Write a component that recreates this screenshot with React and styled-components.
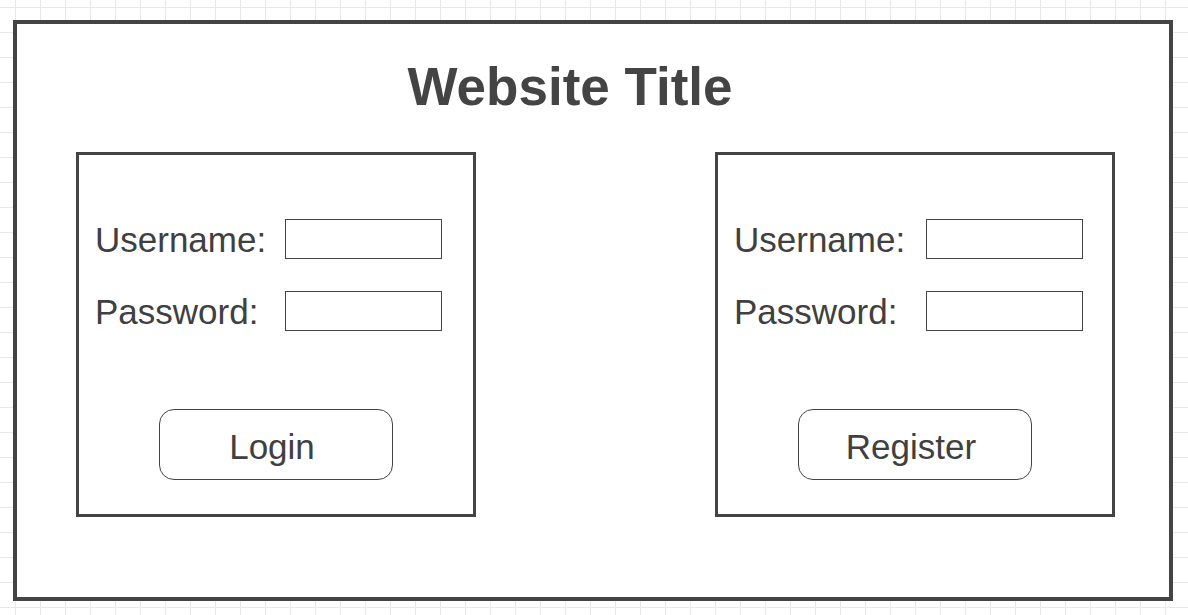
import React from 'react';
import styled, { createGlobalStyle } from 'styled-components';

// #region styles
const GlobalStyle = createGlobalStyle`
  html, body {
    margin: 0;
    padding: 0;
  }
  body {
    width: 1188px;
    height: 615px;
    overflow: hidden;
    font-family: "Liberation Sans", Arial, sans-serif;
    color: #444444;
    background-color: #ffffff;
    background-image:
      linear-gradient(to right, #e8e8e8 1px, transparent 1px),
      linear-gradient(to bottom, #e8e8e8 1px, transparent 1px);
    background-size: 25px 25px;
    background-position: 15px 7px;
  }
`;

const Page = styled.div`
  padding: 20px 0 0 13px;
`;

const Frame = styled.div`
  box-sizing: border-box;
  width: 1160px;
  height: 581px;
  border: 4px solid #444444;
  background: #ffffff;
  padding-top: 33px;
`;

const Title = styled.h1`
  margin: 0;
  padding-right: 46px;
  text-align: center;
  font-size: 53px;
  line-height: 60px;
  font-weight: 700;
  color: #444444;
`;

const Panels = styled.div`
  display: flex;
  gap: 239px;
  margin-top: 35px;
  padding-left: 59px;
`;

const Panel = styled.form`
  box-sizing: border-box;
  width: 400px;
  height: 365px;
  border: 3px solid #444444;
  padding: 64px 0 0 16px;
  display: flex;
  flex-direction: column;
`;

const Fields = styled.div`
  display: grid;
  grid-template-columns: ${props => props.labelWidth}px 157px;
  row-gap: 32px;
`;

const Label = styled.label`
  height: 40px;
  font-size: 35px;
  line-height: 42px;
  color: #404040;
`;

const Input = styled.input`
  box-sizing: border-box;
  width: 157px;
  height: 40px;
  margin: 0;
  border: 1px solid #444444;
  border-radius: 0;
  background: #ffffff;
`;

const Button = styled.button`
  box-sizing: border-box;
  align-self: center;
  width: 234px;
  height: 71px;
  margin: 78px 16px 0 0;
  padding: 4px 8px 0 0;
  border: 1px solid #444444;
  border-radius: 15px;
  background: #ffffff;
  font-family: "Liberation Sans", Arial, sans-serif;
  font-size: 35px;
  color: #404040;
`;
// #endregion

const AuthPanel = ({ action, labelWidth }) => (
  <Panel onSubmit={e => e.preventDefault()}>
    <Fields labelWidth={labelWidth}>
      <Label>Username:</Label>
      <Input type="text" />
      <Label>Password:</Label>
      <Input type="password" />
    </Fields>
    <Button type="submit">{action}</Button>
  </Panel>
);

const App = () => (
  <>
    <GlobalStyle />
    <Page>
      <Frame>
        <Title>Website Title</Title>
        <Panels>
          <AuthPanel action="Login" labelWidth={190} />
          <AuthPanel action="Register" labelWidth={192} />
        </Panels>
      </Frame>
    </Page>
  </>
);

export default App;
